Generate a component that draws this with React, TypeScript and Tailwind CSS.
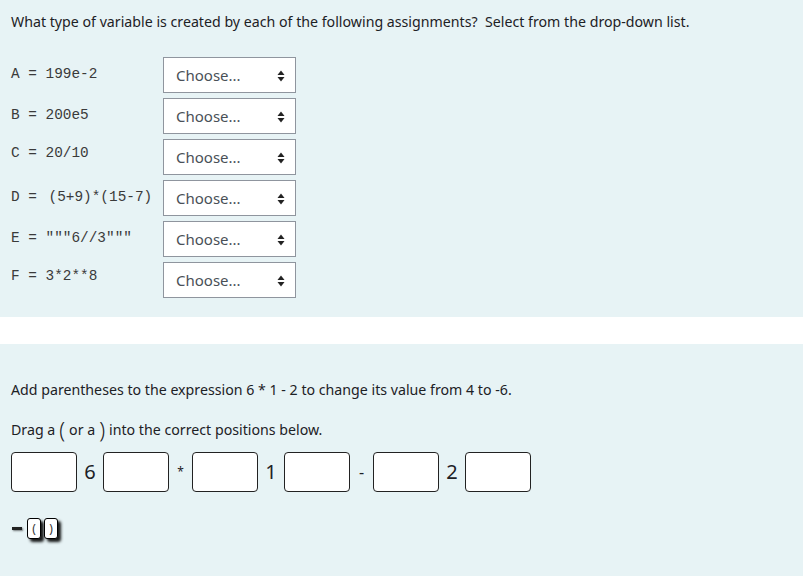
import React from "react";

const rows = [
  { label: "A = 199e-2", shift: "" },
  { label: "B = 200e5", shift: "" },
  { label: "C = 20/10", shift: "-mt-[6px]" },
  { label: "D = ", rest: "(5+9)*(15-7)", shift: "" },
  { label: 'E = """6//3"""', shift: "" },
  { label: "F = 3*2**8", shift: "-mt-[7px]" },
];

function ChooseSelect() {
  return (
    <div className="flex h-[36px] w-[133px] items-center justify-between border border-[#8f959e] bg-white pl-[12px] pr-[10px] text-[15px] text-[#495057]">
      <span>Choose...</span>
      <svg width="8" height="12" viewBox="0 0 8 12" className="mt-[1px]">
        <path d="M4 0.5 L7.5 5 L0.5 5 Z" fill="#222" />
        <path d="M4 11.5 L7.5 7 L0.5 7 Z" fill="#222" />
      </svg>
    </div>
  );
}

function DropBox() {
  return <div className="h-[40px] w-[66px] shrink-0 rounded-[4px] border border-[#222] bg-white" />;
}

function Chip({ ch }: { ch: string }) {
  return (
    <div className="flex h-[21px] w-[14px] items-center justify-center rounded-[3px] border border-black bg-white text-[12px] leading-none text-[#333] shadow-[3px_3px_3px_rgba(0,0,0,0.9)]">
      {ch}
    </div>
  );
}

export default function App() {
  return (
    <div className="min-h-[576px] w-[803px] bg-white font-['Noto_Sans',sans-serif] text-[#1d2125]">
      {/* first question */}
      <div className="h-[317px] bg-[#e7f3f5] px-[11px] pt-[10px]">
        <p className="text-[14.2px] leading-[24px]">
          What type of variable is created by each of the following assignments?&nbsp; Select from the drop-down list.
        </p>
        <div className="mt-[23px] flex flex-col gap-[5px]">
          {rows.map((r) => (
            <div key={r.label} className="flex items-center">
              <span
                className={`w-[152px] whitespace-pre font-['Liberation_Mono',monospace] text-[14.4px] text-[#3a3a3a] ${r.shift}`}
              >
                {r.label}
                {r.rest && <span className="ml-[3px]">{r.rest}</span>}
              </span>
              <ChooseSelect />
            </div>
          ))}
        </div>
      </div>

      {/* gap */}
      <div className="h-[27px] bg-white" />

      {/* second question */}
      <div className="h-[232px] bg-[#e7f3f5] px-[11px] pt-[34px]">
        <p className="text-[14.2px] leading-[24px]">
          Add parentheses to the expression 6 * 1 - 2 to change its value from 4 to -6.
        </p>
        <p className="mt-[16px] flex items-center text-[14.2px] leading-[24px]">
          <span>Drag a</span>
          <span className="mx-[4px] text-[21px] font-light leading-none">(</span>
          <span>or a</span>
          <span className="mx-[4px] text-[21px] font-light leading-none">)</span>
          <span>into the correct positions below.</span>
        </p>
        <div className="mt-[10px] flex items-center">
          <DropBox />
          <span className="w-[26px] text-center text-[20px]">6</span>
          <DropBox />
          <span className="w-[23px] text-center text-[12px]">*</span>
          <DropBox />
          <span className="w-[26px] text-center text-[20px]">1</span>
          <DropBox />
          <span className="w-[23px] text-center text-[16px]">-</span>
          <DropBox />
          <span className="w-[26px] text-center text-[20px]">2</span>
          <DropBox />
        </div>
        <div className="mt-[26px] flex items-center gap-[3px]">
          <div className="ml-[1px] mr-[2px] h-[3px] w-[10px] bg-[#222] shadow-[1px_1px_2px_rgba(0,0,0,0.5)]" />
          <Chip ch="(" />
          <Chip ch=")" />
        </div>
      </div>
    </div>
  );
}
